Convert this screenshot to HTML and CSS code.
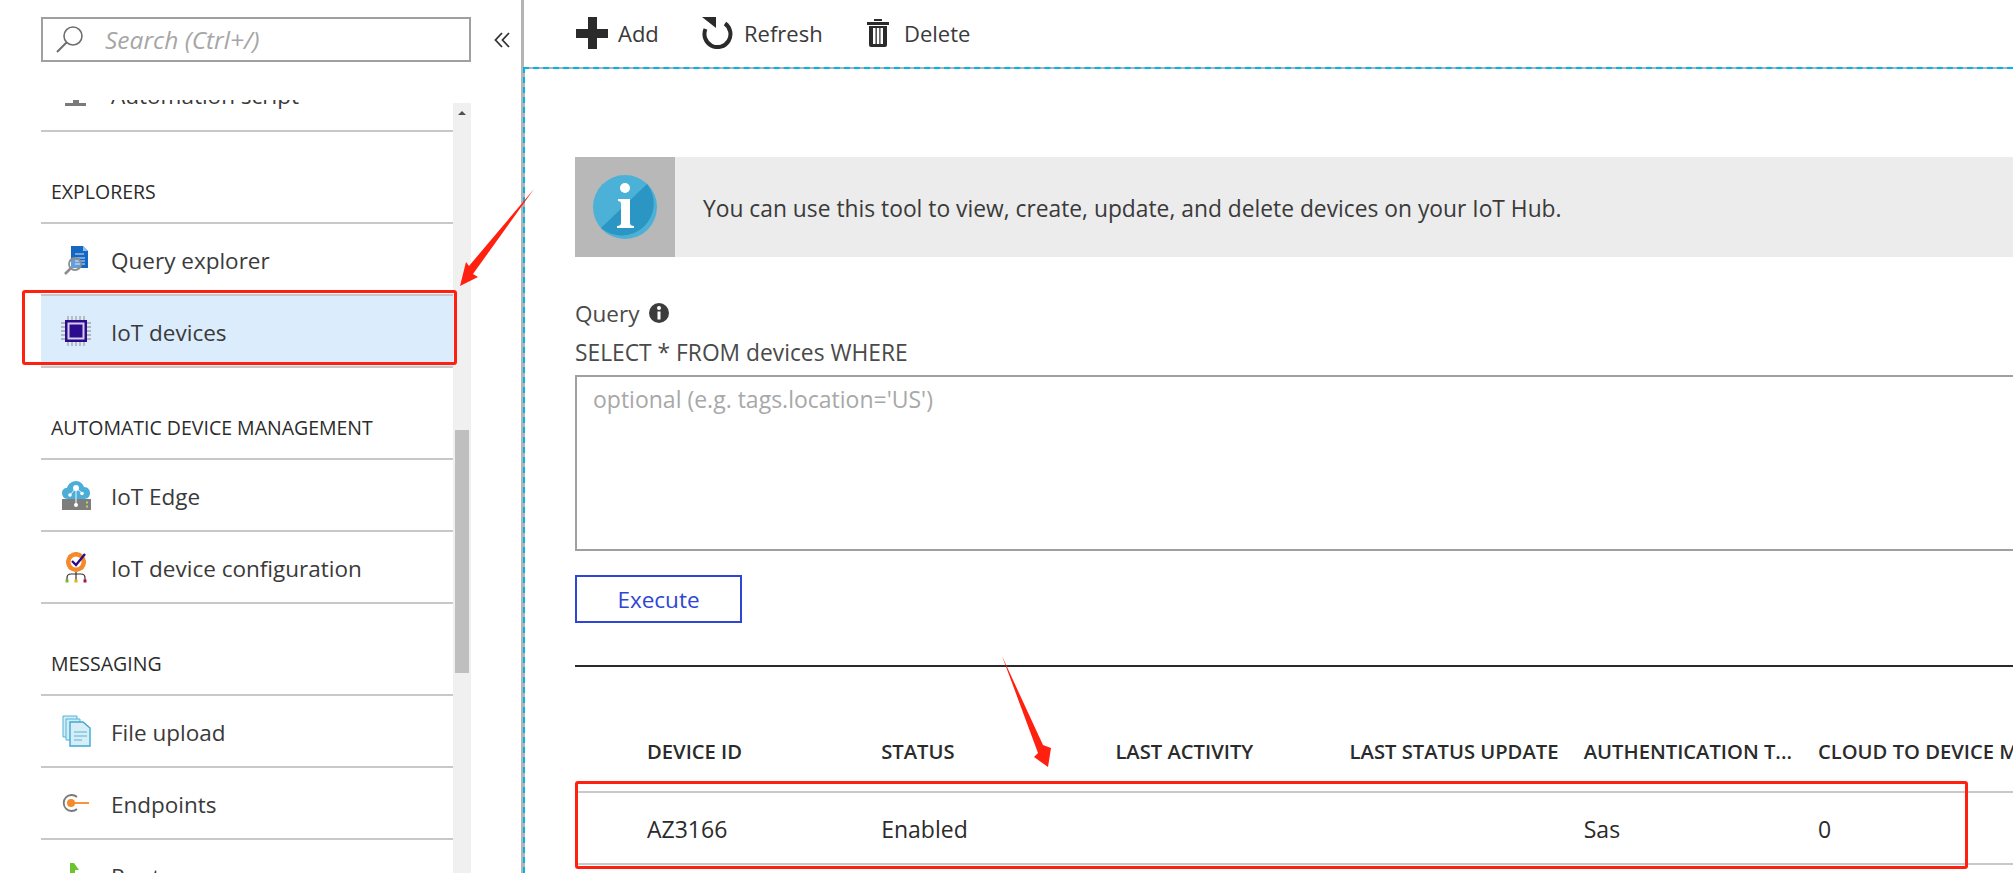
FILE: index.html
```html
<!DOCTYPE html>
<html lang="en">
<head>
    <meta charset="UTF-8">
    <meta name="viewport" content="width=device-width, initial-scale=1.0">
    <title>IoT devices</title>
    <link rel="stylesheet" href="styles.css">
</head>
<body>
    <div class="page">
        <div class="sidebar">
            <div class="search-row">
                <div class="search-box">
                    <svg class="search-icon" width="30" height="30" viewBox="0 0 30 30"><circle cx="18" cy="11" r="9" fill="none" stroke="#6e6e6e" stroke-width="1.6"/><path d="M11.5 17.5 2 27" stroke="#6e6e6e" stroke-width="2" fill="none"/></svg>
                    <input class="search-input" type="text" placeholder="Search (Ctrl+/)">
                </div>
                <svg class="collapse-icon" width="18" height="16" viewBox="0 0 18 16"><path d="M8 1 1.5 8 8 15M15 1 8.5 8 15 15" fill="none" stroke="#333" stroke-width="1.8"/></svg>
            </div>
            <div class="nav-wrap">
                <div class="nav-list">
                    <div class="nav-item first">
                        <svg class="nav-icon" width="32" height="32" viewBox="0 0 32 32"><path d="M13 17h6v7h7v3H5v-3h8z" fill="#7a7a7a"/></svg>
                        <span>Automation script</span>
                    </div>

                    <div class="nav-head">EXPLORERS</div>
                    <div class="nav-item">
                        <svg class="nav-icon" width="32" height="32" viewBox="0 0 32 32">
                            <path d="M11 3h12l5 5v17H11z" fill="#1468c4"/><path d="M23 3l5 5h-5z" fill="#8fc3ee"/>
                            <path d="M15 11h9M15 15h10M15 18h10M15 21h10" stroke="#cfe4f7" stroke-width="1.2"/>
                            <circle cx="15" cy="21" r="6" fill="#ffffff" fill-opacity=".35" stroke="#8e8e8e" stroke-width="1.8"/>
                            <path d="M10.5 25.500 5 31" stroke="#8e8e8e" stroke-width="2.6"/>
                        </svg>
                        <span>Query explorer</span>
                    </div>
                    <div class="nav-item selected">
                        <svg class="nav-icon" width="32" height="32" viewBox="0 0 32 32">
                            <path d="M1 8h30M1 12h30M1 16h30M1 20h30M1 24h30M8 1v30M12 1v30M16 1v30M20 1v30M24 1v30" stroke="#a4a4a4" stroke-width="1.300"/>
                            <rect x="5" y="5" width="22" height="22" fill="#2d0b8f"/>
                            <rect x="7.500" y="7.500" width="17" height="17" fill="#d5d0ea"/>
                            <rect x="9.500" y="9.500" width="13" height="13" fill="#2d0b8f"/>
                        </svg>
                        <span>IoT devices</span>
                    </div>

                    <div class="nav-head">AUTOMATIC DEVICE MANAGEMENT</div>
                    <div class="nav-item">
                        <svg class="nav-icon" width="32" height="32" viewBox="0 0 32 32">
                            <path d="M8 20c-4 0-6-3-6-6 0-3 2-5 5-5 1-4 5-7 9-7 4 0 7 3 8 6 4 0 6 3 6 6 0 3-2 6-6 6z" fill="#4aaed8"/>
                            <path d="M16 9v7M16 9l-6 7M16 9l6 5M16 16v10" stroke="#e6f4fa" stroke-width="1"/>
                            <circle cx="16" cy="9" r="3" fill="#fff"/><circle cx="10" cy="16" r="1.800" fill="#fff"/><circle cx="22" cy="14.500" r="1.800" fill="#fff"/>
                            <rect x="2" y="20" width="29" height="11" fill="#7d7d7d"/>
                            <path d="M16 20v5" stroke="#fff" stroke-width="1"/>
                            <circle cx="16" cy="26" r="2" fill="#fff"/>
                            <rect x="26" y="22.500" width="2" height="2" fill="#b7d35a"/><rect x="26" y="26.500" width="2" height="2" fill="#b7d35a"/>
                        </svg>
                        <span>IoT Edge</span>
                    </div>
                    <div class="nav-item">
                        <svg class="nav-icon" width="32" height="32" viewBox="0 0 32 32">
                            <circle cx="16" cy="11" r="7.500" fill="none" stroke="#f58a2b" stroke-width="5"/>
                            <path d="M16 1v3M16 18v3M6 11h3M23 11h3M9 4l2 2M23 18l-2-2M9 18l2-2" stroke="#f58a2b" stroke-width="3"/>
                            <circle cx="16" cy="11" r="5.500" fill="#fff"/>
                            <path d="M12 10l4 4 9-11" fill="none" stroke="#2d0b8f" stroke-width="2.400"/>
                            <path d="M7 29v-2q0-4 4-4h10q4 0 4 4v2M16 21v8" fill="none" stroke="#333" stroke-width="1.200"/>
                            <rect x="5.500" y="28.500" width="3" height="3" fill="#7cb82f"/><rect x="14.500" y="28.500" width="3" height="3" fill="#e3b400"/><rect x="23.500" y="28.500" width="3" height="3" fill="#b3123a"/>
                        </svg>
                        <span>IoT device configuration</span>
                    </div>

                    <div class="nav-head">MESSAGING</div>
                    <div class="nav-item">
                        <svg class="nav-icon" width="32" height="32" viewBox="0 0 32 32">
                            <path d="M3 1h14v21H3z" fill="#d3ecf6" stroke="#52b4d8"/>
                            <path d="M6 4h14v21H6z" fill="#d3ecf6" stroke="#52b4d8"/>
                            <path d="M10 7h13l7 6v18H10z" fill="#d8eef7" stroke="#3ba9d3" stroke-width="1.400"/>
                            <path d="M14 17h13M14 21h13M14 25h8" stroke="#52b4d8" stroke-width="1.200"/>
                        </svg>
                        <span>File upload</span>
                    </div>
                    <div class="nav-item">
                        <svg class="nav-icon" width="32" height="32" viewBox="0 0 32 32">
                            <path d="M17 10a8 8 0 1 0 0 12" fill="none" stroke="#7a7a7a" stroke-width="1.800"/>
                            <circle cx="11" cy="16" r="4" fill="#f58a2b"/>
                            <path d="M11 16h18" stroke="#f58a2b" stroke-width="1.800"/>
                        </svg>
                        <span>Endpoints</span>
                    </div>
                    <div class="nav-item">
                        <svg class="nav-icon" width="32" height="32" viewBox="0 0 32 32"><path d="M10 4l4 0 5 7-4 0v12h-5z" fill="#6cc52c"/></svg>
                        <span>Routes</span>
                    </div>
                </div>
                <div class="scrollbar">
                    <div class="scroll-arrow"></div>
                    <div class="scroll-thumb"></div>
                </div>
            </div>
        </div>

        <div class="main">
            <div class="toolbar">
                <div class="tool tool-add">
                    <svg width="32" height="32" viewBox="0 0 32 32"><path d="M12 0h9v12h11v9H21v11h-9V21H0v-9h12z" fill="#2b2b2b"/></svg>
                    <span>Add</span>
                </div>
                <div class="tool tool-refresh">
                    <svg width="32" height="32" viewBox="0 0 32 32"><path d="M23 6.500A13 13 0 1 1 3.500 12" fill="none" stroke="#2b2b2b" stroke-width="4"/><path d="M0 0h14v11z" fill="#2b2b2b"/></svg>
                    <span>Refresh</span>
                </div>
                <div class="tool tool-delete">
                    <svg width="22" height="32" viewBox="0 0 22 32"><path d="M7 2h8v2H7zM0 5h22v3H0zM2 9h18v19q0 2-2 2H4q-2 0-2-2z" fill="#2b2b2b"/><path d="M6 11h2.500v16H6zM9.800 11h2.500v16H9.800zM13.500 11H16v16h-2.500z" fill="#fff"/></svg>
                    <span>Delete</span>
                </div>
            </div>

            <div class="content">
                <div class="banner">
                    <div class="banner-icon">
                        <svg width="64" height="64" viewBox="0 0 64 64">
                            <circle cx="32" cy="32" r="32" fill="#4bb1d7"/>
                            <path d="M8 53 54 9A32 32 0 0 1 8 53z" fill="#2b95c3"/>
                            <circle cx="32" cy="13" r="5" fill="#fff"/>
                            <path d="M25 24h12v24q0 3 4 3v2H24v-2q4 0 4-3V29q0-3-3-3z" fill="#fff"/>
                        </svg>
                    </div>
                    <div class="banner-text">You can use this tool to view, create, update, and delete devices on your IoT Hub.</div>
                </div>

                <div class="query-label">
                    <span>Query</span>
                    <svg width="20" height="20" viewBox="0 0 20 20"><circle cx="10" cy="10" r="10" fill="#3c3c3c"/><circle cx="10" cy="5" r="2" fill="#fff"/><rect x="8.500" y="8.500" width="3" height="8" fill="#fff"/></svg>
                </div>
                <div class="query-sub">SELECT * FROM devices WHERE</div>
                <textarea class="query-box" placeholder="optional (e.g. tags.location='US')"></textarea>
                <button class="execute-btn">Execute</button>
                <div class="divider"></div>

                <div class="table">
                    <div class="table-row table-head">
                        <div>DEVICE ID</div>
                        <div>STATUS</div>
                        <div>LAST ACTIVITY</div>
                        <div>LAST STATUS UPDATE</div>
                        <div>AUTHENTICATION T...</div>
                        <div>CLOUD TO DEVICE M...</div>
                    </div>
                    <div class="table-row table-body">
                        <div>AZ3166</div>
                        <div>Enabled</div>
                        <div></div>
                        <div></div>
                        <div>Sas</div>
                        <div>0</div>
                    </div>
                </div>
            </div>
        </div>
    </div>

    <div class="mark mark-nav"></div>
    <div class="mark mark-row"></div>
    <svg class="arrows" width="2013" height="873" viewBox="0 0 2013 873">
        <path d="M534 189 473 274 478 277 460 286 466 262 469 266z" fill="#ff2010"/>
        <path d="M1002 656 1043 745 1051 748 1048 767 1034 757 1038 753z" fill="#ff2010"/>
    </svg>
</body>
</html>
```

FILE: styles.css
```css
* {
    box-sizing: border-box;
}
html, body {
    height: 100%;
}
body {
    margin: 0;
    overflow: hidden;
    background: #fff;
    font-family: "Open Sans", "Noto Sans", sans-serif;
    color: #3a3a3a;
}
.page {
    display: flex;
    width: 2013px;
    height: 873px;
    overflow: hidden;
}

/* left blade menu */
.sidebar {
    flex: none;
    width: 523px;
    height: 873px;
    padding-left: 41px;
    border-right: 2px solid #b4b4b4;
}
.search-row {
    display: flex;
    align-items: center;
    padding-top: 17px;
}
.search-box {
    display: flex;
    align-items: center;
    width: 430px;
    height: 45px;
    border: 2px solid #a0a0a0;
}
.search-icon {
    margin-left: 12px;
    flex: none;
}
.search-input {
    border: none;
    outline: none;
    flex: 1;
    min-width: 0;
    margin-left: 20px;
    padding: 0;
    background: none;
    font-family: inherit;
    font-size: 24.500px;
    font-style: italic;
}
.search-input::placeholder {
    color: #a6a6a6;
    opacity: 1;
}
.collapse-icon {
    margin-left: 23px;
    flex: none;
}
.nav-wrap {
    display: flex;
    width: 430px;
    height: 773px;
    margin-top: 38px;
    overflow: hidden;
}
.nav-list {
    flex: none;
    width: 412px;
}
.nav-item {
    display: flex;
    align-items: center;
    height: 72px;
    padding-left: 19px;
    border-bottom: 2px solid #c8c8c8;
    font-size: 22.5px;
    white-space: nowrap;
}
.nav-item span {
    padding-top: 2px;
}
.nav-item.first {
    margin-top: -41px;
    height: 73px;
}
.nav-item.selected {
    background: #dbecfc;
}
.nav-icon {
    flex: none;
    margin-right: 19px;
}
.nav-head {
    display: flex;
    align-items: flex-end;
    height: 92px;
    padding: 0 0 19px 10px;
    border-bottom: 2px solid #c8c8c8;
    font-size: 19.500px;
    font-weight: 500;
    line-height: 22px;
    color: #2b2b2b;
    white-space: nowrap;
}
.scrollbar {
    flex: none;
    width: 18px;
    margin-top: 3px;
    background: #f0f0f0;
}
.scroll-arrow {
    width: 0;
    height: 0;
    margin: 8px auto 0;
    border-left: 4px solid transparent;
    border-right: 4px solid transparent;
    border-bottom: 4px solid #505050;
}
.scroll-thumb {
    width: 14px;
    height: 243px;
    margin: 315px auto 0;
    background: #bfbfbf;
}

/* right side */
.main {
    flex: none;
    width: 1490px;
    height: 873px;
}
.toolbar {
    display: flex;
    align-items: center;
    height: 67px;
    padding-left: 52px;
    padding-bottom: 1px;
    border-left: 1px solid #b4b4b4;
    font-size: 22px;
}
.tool {
    display: flex;
    align-items: center;
    gap: 10px;
}
.tool span {
    margin-top: -1px;
}
.tool-add {
    width: 126px;
}
.tool-refresh {
    width: 165px;
}
.tool-delete {
    gap: 15px;
}
.content {
    width: 100%;
    height: 806px;
    padding: 88px 0 0 50px;
    border: 2px dashed #00b4ef;
    border-right: none;
    border-bottom: none;
    background: linear-gradient(#fff, #fff) padding-box, linear-gradient(#b4b4b4, #b4b4b4) border-box;
    overflow: hidden;
}
.banner {
    display: flex;
    align-items: center;
    width: 1440px;
    height: 100px;
    background: #ececec;
}
.banner-icon {
    display: flex;
    align-items: center;
    justify-content: center;
    flex: none;
    width: 100px;
    height: 100px;
    background: #b8b8b8;
}
.banner-text {
    margin-left: 28px;
    padding-top: 2px;
    font-size: 22.8px;
}
.query-label {
    display: flex;
    align-items: center;
    gap: 10px;
    height: 30px;
    margin-top: 41px;
    font-size: 22.5px;
    color: #4a4a4a;
}
.query-sub {
    height: 30px;
    margin-top: 10px;
    font-size: 22.8px;
    line-height: 30px;
    color: #4a4a4a;
}
.query-box {
    display: block;
    width: 1500px;
    height: 176px;
    margin-top: 7px;
    padding: 8px 16px;
    border: 2px solid #a0a0a0;
    border-radius: 0;
    outline: none;
    resize: none;
    font-family: inherit;
    font-size: 23px;
    line-height: 28px;
}
.query-box::placeholder {
    color: #a8a8a8;
    opacity: 1;
}
.execute-btn {
    display: block;
    width: 167px;
    height: 48px;
    margin-top: 24px;
    border: 2px solid #2f45d3;
    background: #fff;
    color: #2f45d3;
    font-family: inherit;
    font-size: 22.500px;
    font-weight: 500;
}
.divider {
    width: 1440px;
    height: 2px;
    margin-top: 42px;
    background: #2a2a2a;
}
.table {
    width: 1440px;
}
.table-row {
    display: grid;
    grid-template-columns: repeat(6, 234.2px);
    padding-left: 72px;
    white-space: nowrap;
}
.table-head {
    height: 126px;
    padding-top: 69px;
    border-bottom: 2px solid #c8c8c8;
    font-size: 20.2px;
    font-weight: 600;
    line-height: 30px;
    color: #2b2b2b;
}
.table-body {
    align-items: center;
    height: 72px;
    padding-top: 2px;
    border-bottom: 2px solid #c8c8c8;
    font-size: 23px;
    color: #2b2b2b;
}

/* red hand drawn annotations */
.mark {
    position: absolute;
    border: 3px solid #ff2010;
    border-radius: 3px;
}
.mark-nav {
    left: 22px;
    top: 290px;
    width: 435px;
    height: 75px;
}
.mark-row {
    left: 575px;
    top: 781px;
    width: 1393px;
    height: 88px;
}
.arrows {
    position: absolute;
    left: 0;
    top: 0;
    pointer-events: none;
}
```
